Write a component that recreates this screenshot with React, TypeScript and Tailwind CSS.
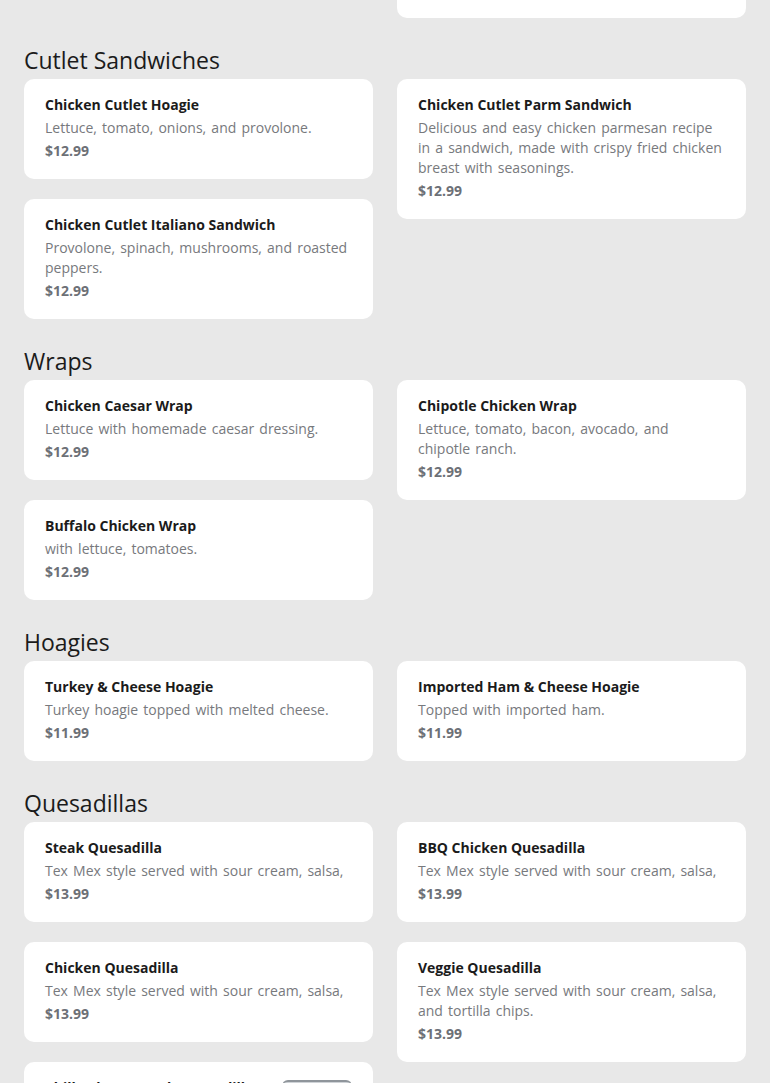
type Item = { name: string; desc: string; price: string; image?: boolean };
type Section = { title: string; left: Item[]; right: Item[] };

const sections: Section[] = [
  {
    title: "Cutlet Sandwiches",
    left: [
      { name: "Chicken Cutlet Hoagie", desc: "Lettuce, tomato, onions, and provolone.", price: "$12.99" },
      {
        name: "Chicken Cutlet Italiano Sandwich",
        desc: "Provolone, spinach, mushrooms, and roasted peppers.",
        price: "$12.99",
      },
    ],
    right: [
      {
        name: "Chicken Cutlet Parm Sandwich",
        desc: "Delicious and easy chicken parmesan recipe in a sandwich, made with crispy fried chicken breast with seasonings.",
        price: "$12.99",
      },
    ],
  },
  {
    title: "Wraps",
    left: [
      { name: "Chicken Caesar Wrap", desc: "Lettuce with homemade caesar dressing.", price: "$12.99" },
      { name: "Buffalo Chicken Wrap", desc: "with lettuce, tomatoes.", price: "$12.99" },
    ],
    right: [
      {
        name: "Chipotle Chicken Wrap",
        desc: "Lettuce, tomato, bacon, avocado, and chipotle ranch.",
        price: "$12.99",
      },
    ],
  },
  {
    title: "Hoagies",
    left: [{ name: "Turkey & Cheese Hoagie", desc: "Turkey hoagie topped with melted cheese.", price: "$11.99" }],
    right: [{ name: "Imported Ham & Cheese Hoagie", desc: "Topped with imported ham.", price: "$11.99" }],
  },
  {
    title: "Quesadillas",
    left: [
      { name: "Steak Quesadilla", desc: "Tex Mex style served with sour cream, salsa,", price: "$13.99" },
      { name: "Chicken Quesadilla", desc: "Tex Mex style served with sour cream, salsa,", price: "$13.99" },
      {
        name: "Philly Cheesesteak Quesadilla",
        desc: "Tex Mex style served with sour cream, salsa,",
        price: "$13.99",
        image: true,
      },
    ],
    right: [
      { name: "BBQ Chicken Quesadilla", desc: "Tex Mex style served with sour cream, salsa,", price: "$13.99" },
      {
        name: "Veggie Quesadilla",
        desc: "Tex Mex style served with sour cream, salsa, and tortilla chips.",
        price: "$13.99",
      },
    ],
  },
];

function Card({ item }: { item: Item }) {
  return (
    <div className="bg-white rounded-[10px] px-[21px] pt-4 pb-[18px] flex gap-4">
      <div className="flex-1 min-w-0">
        <h3 className="text-[14px] leading-5 font-bold text-[#1b1b1b]">{item.name}</h3>
        <p className="mt-[3px] text-[14px] leading-5 [word-spacing:1.5px] text-[#77797d]">{item.desc}</p>
        <p className="mt-[3px] text-[14px] leading-5 font-bold text-[#6d7076]">{item.price}</p>
      </div>
      {item.image && (
        <div className="w-[70px] h-[70px] mt-[2px] rounded-md bg-[#cfd3d7] border-t-2 border-[#8f959b]" />
      )}
    </div>
  );
}

function MenuSection({ section }: { section: Section }) {
  return (
    <section className="mt-[27px]">
      <h2 className="text-[23px] leading-[30px] text-[#1b1b1b] mb-[4px]">{section.title}</h2>
      <div className="grid grid-cols-2 gap-6 items-start">
        <div className="flex flex-col gap-5">
          {section.left.map((it) => (
            <Card key={it.name} item={it} />
          ))}
        </div>
        <div className="flex flex-col gap-5">
          {section.right.map((it) => (
            <Card key={it.name} item={it} />
          ))}
        </div>
      </div>
    </section>
  );
}

export default function App() {
  return (
    <div
      className="min-h-screen bg-[#e8e8e8] px-6 pb-10"
      style={{ fontFamily: "'Open Sans', 'Noto Sans', sans-serif" }}
    >
      <div className="grid grid-cols-2 gap-6">
        <div />
        <div className="h-[18px] bg-white rounded-b-[10px]" />
      </div>
      {sections.map((s) => (
        <MenuSection key={s.title} section={s} />
      ))}
    </div>
  );
}
